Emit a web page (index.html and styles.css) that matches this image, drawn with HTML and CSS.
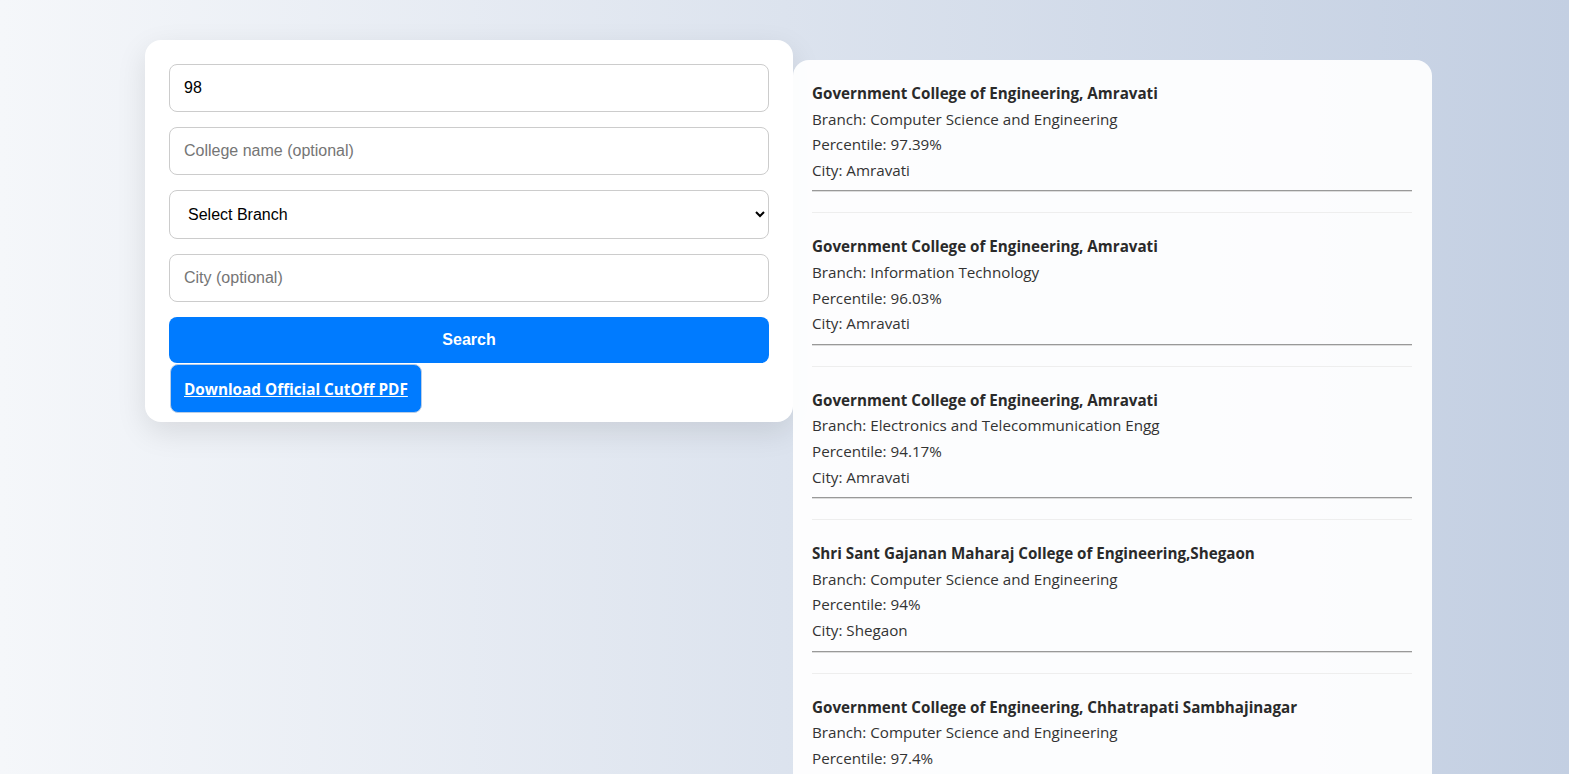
FILE: index.html
```html
<!DOCTYPE html>
<html>
<head>
<meta charset="utf-8">
<link rel="stylesheet" href="styles.css">
</head>
<body>
<div class="page">
  <div class="form-card">
    <input class="field" type="text" value="98">
    <input class="field" type="text" placeholder="College name (optional)">
    <select class="field select">
      <option>Select Branch</option>
    </select>
    <input class="field" type="text" placeholder="City (optional)">
    <button class="search">Search</button>
    <div class="download"><a href="#">Download Official CutOff PDF</a></div>
  </div>
  <div class="results">
    <div class="item">
      <div class="title">Government College of Engineering, Amravati</div>
      <div class="line">Branch: Computer Science and Engineering</div>
      <div class="line">Percentile: 97.39%</div>
      <div class="line">City: Amravati</div>
      <hr class="sep">
    </div>
    <div class="item">
      <div class="title">Government College of Engineering, Amravati</div>
      <div class="line">Branch: Information Technology</div>
      <div class="line">Percentile: 96.03%</div>
      <div class="line">City: Amravati</div>
      <hr class="sep">
    </div>
    <div class="item">
      <div class="title">Government College of Engineering, Amravati</div>
      <div class="line">Branch: Electronics and Telecommunication Engg</div>
      <div class="line">Percentile: 94.17%</div>
      <div class="line">City: Amravati</div>
      <hr class="sep">
    </div>
    <div class="item">
      <div class="title">Shri Sant Gajanan Maharaj College of Engineering,Shegaon</div>
      <div class="line">Branch: Computer Science and Engineering</div>
      <div class="line">Percentile: 94%</div>
      <div class="line">City: Shegaon</div>
      <hr class="sep">
    </div>
    <div class="item">
      <div class="title">Government College of Engineering, Chhatrapati Sambhajinagar</div>
      <div class="line">Branch: Computer Science and Engineering</div>
      <div class="line">Percentile: 97.4%</div>
      <div class="line">City: Chhatrapati Sambhajinagar</div>
      <hr class="sep">
    </div>
  </div>
</div>
</body>
</html>
```
FILE: styles.css
```css
html, body {
  margin: 0;
  padding: 0;
}
body {
  min-height: 100vh;
  background: linear-gradient(to right, #f5f7fa, #c3cfe2);
  font-family: "Open Sans", "Noto Sans", sans-serif;
  color: #333;
}
.page {
  display: flex;
  align-items: flex-start;
  padding: 40px 0 40px 145px;
}
.form-card {
  width: 600px;
  background: #fff;
  border-radius: 16px;
  padding: 24px 24px 9px;
  box-shadow: 0 10px 30px rgba(0, 0, 0, 0.1);
  display: flex;
  flex-direction: column;
}
.field {
  box-sizing: border-box;
  width: 100%;
  height: 48px;
  border: 1px solid #ccc;
  border-radius: 8px;
  padding: 0 14px;
  font-family: "Liberation Sans", Arial, sans-serif;
  font-size: 16px;
  color: #000;
  background: #fff;
  margin-bottom: 15px;
  outline: none;
}
.field::placeholder {
  color: #757575;
}
.select {
  height: 49px;
  padding: 0 10px 0 14px;
}
.search {
  height: 46px;
  border: none;
  border-radius: 8px;
  background: #007bff;
  color: #fff;
  font-family: "Liberation Sans", Arial, sans-serif;
  font-weight: bold;
  font-size: 16px;
  margin-bottom: 1px;
}
.download {
  align-self: flex-start;
  margin-left: 1px;
  background: #007bff;
  border: 1px solid #b9cde6;
  border-radius: 8px;
  padding: 13px 13px 12px 13px;
}
.download a {
  display: block;
  line-height: 22px;
  color: #fff;
  font-weight: bold;
  font-size: 15.3px;
  text-decoration: underline;
}
.results {
  width: 600px;
  margin-top: 20px;
  background: rgba(255, 255, 255, 0.93);
  border-radius: 16px;
  padding: 21px 20px 20px 19px;
  font-size: 15.2px;
  line-height: 25.6px;
}
.item {
  padding-bottom: 12px;
  border-bottom: 1px solid #eee;
  margin-bottom: 21px;
}
.title {
  font-weight: bold;
  color: #2a2a2a;
}
.line {
  color: #333;
}
.sep {
  margin: 7px 0 8px;
  border: 0;
  border-top: 1px solid #999;
  border-bottom: 1px solid #ddd;
  height: 0;
}
```
